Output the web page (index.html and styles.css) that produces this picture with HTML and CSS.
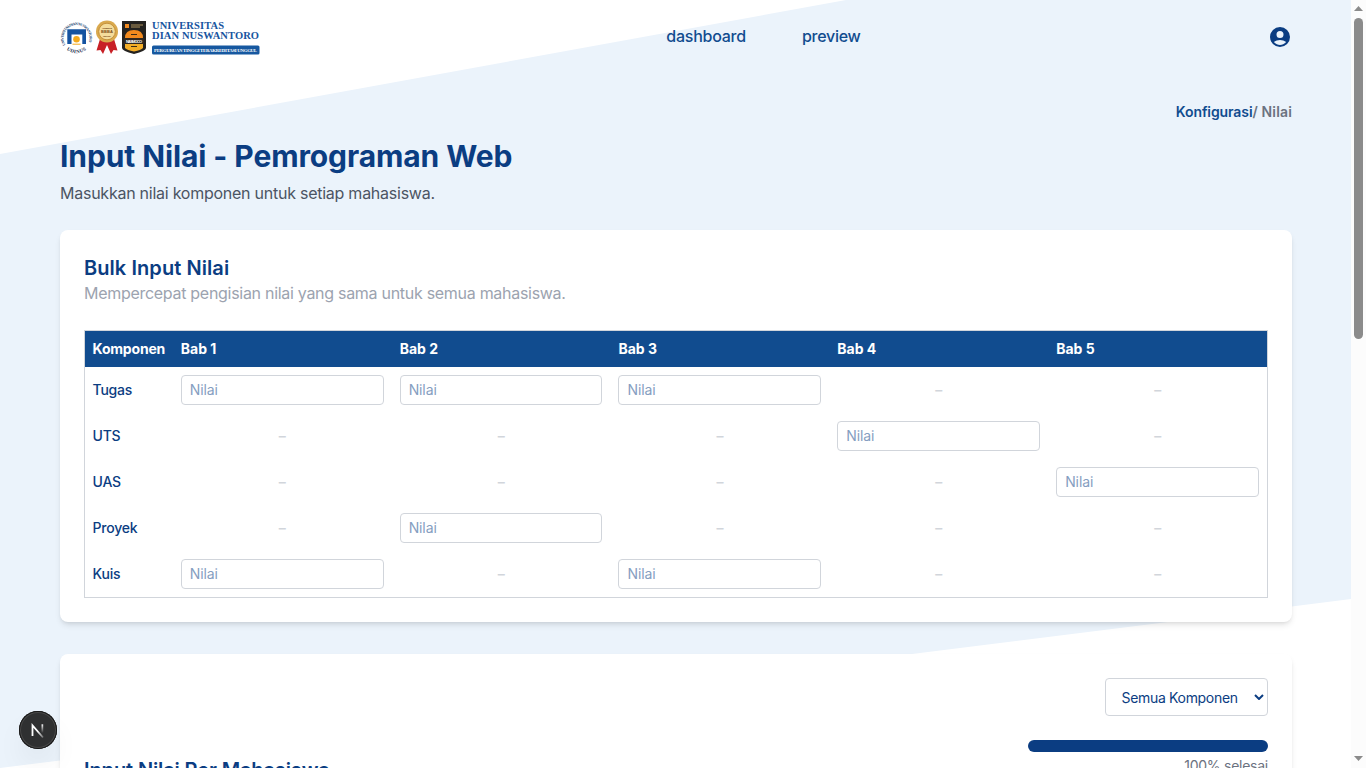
FILE: index.html
```html
<!DOCTYPE html>
<html lang="id">
<head>
<meta charset="utf-8">
<title>Input Nilai</title>
<link rel="stylesheet" href="styles.css">
</head>
<body>
<div class="page">
  <header class="header">
    <svg class="logo" width="200" height="36" viewBox="0 0 200 36" role="img" aria-label="Universitas Dian Nuswantoro">
      <defs>
        <path id="ring" d="M5.500 25A13 13 0 1 1 27.500 25"/>
        <path id="ring-low" d="M4.500 27.500A15.500 15.500 0 0 0 28.500 27.500"/>
      </defs>
      <text class="seal-text"><textPath href="#ring" textLength="52">UNIVERSITAS DIAN NUSWANTORO</textPath></text>
      <text class="seal-name"><textPath href="#ring-low" textLength="21" startOffset="3">UDINUS</textPath></text>
      <path d="M7.300 9.300H26V24H22.300V14.500H11.500V24H7.300Z" fill="#1553a0"/>
      <circle cx="16.500" cy="19.300" r="3.300" fill="#f3a91c"/>
      <path d="M12.500 24.200h8" stroke="#f3a91c" stroke-width="1"/>
      <path d="M40 19L36.500 30.500l4-.5 2.500 4 4-9 4 9 2.500-4 4 .5-3.500-11.500Z" fill="#c82026"/>
      <circle cx="47" cy="11.500" r="11" fill="#d9a94e"/>
      <circle cx="47" cy="11.500" r="8.300" fill="#f4dc9b" stroke="#bd852f" stroke-width=".8"/>
      <text x="42" y="9" class="medal" textLength="10">AKREDITASI</text>
      <text x="41" y="13" class="medal medal-big" textLength="12">BBBA</text>
      <text x="43" y="16.500" class="medal" textLength="8">UNGGUL</text>
      <path d="M62 1H86V28Q86 31 74 34Q62 31 62 28Z" fill="#24221f"/>
      <path d="M65 4h4v4h-4Z" fill="#f28a1e"/>
      <path d="M71 5h12M71 7h9" stroke="#d5b16c" stroke-width=".8"/>
      <path d="M65 18Q65 10 74 10T83 18Z" fill="#f28a1e"/>
      <path d="M65 24H83V28Q81 30 74 31.500Q67 30 65 28Z" fill="#f4ae28"/>
      <path d="M64 18H84V24H64Z" fill="#302820"/>
      <path d="M71 14.500h6M71 26.500h6" stroke="#3a2b18"/>
      <text x="66" y="22.500" class="shield" textLength="16">NASMOCO</text>
      <text x="92" y="9" class="brand" textLength="72">UNIVERSITAS</text>
      <text x="92" y="19.400" class="brand" textLength="107">DIAN NUSWANTORO</text>
      <rect x="92" y="25.500" width="107.500" height="9" rx="1.500" fill="#1658a0"/>
      <text x="94" y="31.800" class="motto" textLength="103">PERGURUAN TINGGI TERAKREDITASI UNGGUL</text>
    </svg>
    <nav class="nav"><a>dashboard</a><a>preview</a></nav>
    <svg class="avatar" width="24" height="24" viewBox="0 0 24 24"><path fill="#0b3d82" fill-rule="evenodd" d="M12 2a10 10 0 1 0 0 20 10 10 0 0 0 0-20Zm0 4a3.500 3.500 0 1 1 0 7 3.500 3.500 0 0 1 0-7Zm0 14c-2.030 0-4.430-.82-6.140-2.880C7.550 15.800 9.680 15 12 15s4.450.8 6.140 2.120C16.430 19.180 14.030 20 12 20Z"/></svg>
  </header>
  <main class="content">
    <div class="crumbs"><b>Konfigurasi</b><span>/ Nilai</span></div>
    <h1 class="title">Input Nilai - Pemrograman Web</h1>
    <p class="subtitle">Masukkan nilai komponen untuk setiap mahasiswa.</p>
    <section class="card bulk">
      <h2 class="card-title">Bulk Input Nilai</h2>
      <p class="card-note">Mempercepat pengisian nilai yang sama untuk semua mahasiswa.</p>
      <div class="grid">
        <div class="row head"><span>Komponen</span><span>Bab 1</span><span>Bab 2</span><span>Bab 3</span><span>Bab 4</span><span>Bab 5</span></div>
        <div class="row"><span>Tugas</span><input class="field" placeholder="Nilai"><input class="field" placeholder="Nilai"><input class="field" placeholder="Nilai"><i>–</i><i>–</i></div>
        <div class="row"><span>UTS</span><i>–</i><i>–</i><i>–</i><input class="field" placeholder="Nilai"><i>–</i></div>
        <div class="row"><span>UAS</span><i>–</i><i>–</i><i>–</i><i>–</i><input class="field" placeholder="Nilai"></div>
        <div class="row"><span>Proyek</span><i>–</i><input class="field" placeholder="Nilai"><i>–</i><i>–</i><i>–</i></div>
        <div class="row"><span>Kuis</span><input class="field" placeholder="Nilai"><i>–</i><input class="field" placeholder="Nilai"><i>–</i><i>–</i></div>
      </div>
    </section>
    <section class="card students">
      <div class="select"><span>Semua Komponen</span><svg width="10" height="6" viewBox="0 0 10 6"><path d="M1 1l4 4 4-4" fill="none" stroke="#0b3d82" stroke-width="2"/></svg></div>
      <div class="progress"></div>
      <div class="summary"><h2 class="card-title students-title">Input Nilai Per Mahasiswa</h2><span class="done">100% selesai</span></div>
    </section>
  </main>
</div>
<div class="scrollbar">
  <svg width="15" height="18" viewBox="0 0 15 18"><path d="M3 11l4.500-5 4.500 5Z" fill="#8b8b8b"/></svg>
  <div class="thumb"></div>
  <svg class="down" width="15" height="18" viewBox="0 0 15 18"><path d="M3 6l4.500 5L12 6Z" fill="#8b8b8b"/></svg>
</div>
<div class="badge"><svg width="38" height="38" viewBox="0 0 38 38">
  <defs>
    <linearGradient id="diag" gradientUnits="userSpaceOnUse" x1="19" y1="20" x2="25" y2="27"><stop offset="0" stop-color="#fff"/><stop offset="1" stop-color="#fff" stop-opacity=".2"/></linearGradient>
    <linearGradient id="bar" gradientUnits="userSpaceOnUse" x1="0" y1="13" x2="0" y2="22"><stop offset="0" stop-color="#fff"/><stop offset="1" stop-color="#fff" stop-opacity="0"/></linearGradient>
  </defs>
  <path d="M13.500 25V14.500L24 26.500" fill="none" stroke="url(#diag)" stroke-width="1.800"/><path d="M22.500 13.300h1.700V22h-1.700Z" fill="url(#bar)"/></svg></div>
</body>
</html>
```
FILE: styles.css
```css
* { box-sizing: border-box; }
body { margin: 0; width: 1366px; height: 768px; overflow: hidden; display: flex; font-family: Inter, "Liberation Sans", sans-serif; color: #0b3d82; background: #fff; }
h1, h2, p { margin: 0; }
i { font-style: normal; }
.page { width: 1351px; height: 768px; overflow: hidden; background: #ebf3fb; position: relative; isolation: isolate; }
.page::before, .page::after { content: ""; position: absolute; inset: 0; z-index: -1; background: #fff; }
.page::before { clip-path: polygon(0 0, 846px 0, 0 154px); }
.page::after { clip-path: polygon(0 768px, 1351px 599px, 1351px 768px); }
.header { height: 74px; padding: 0 59px 0 60px; display: flex; justify-content: space-between; align-items: center; }
.logo { display: block; margin-top: 2px; overflow: visible; }
.nav { display: flex; gap: 56px; font-size: 16px; line-height: 24px; color: #114c8f; font-weight: 450; letter-spacing: -.25px; padding: 0 1px 2px 0; }
.seal-text { font: bold 3.8px "Liberation Serif", serif; fill: #26456f; }
.seal-name { font: bold 5px "Liberation Serif", serif; fill: #1b2d4c; }
.medal { font: bold 2.4px "Liberation Sans", sans-serif; fill: #7c4d19; }
.medal-big { font-size: 4px; }
.shield { font: bold 4px "Liberation Sans", sans-serif; fill: #fff; }
.brand { font: bold 10.5px "Liberation Serif", serif; fill: #1755a0; }
.motto { font: bold 4.8px "Liberation Serif", serif; fill: #fff; }
.content { padding: 28px 59px 0 60px; }
.crumbs { display: flex; justify-content: flex-end; font-size: 14px; line-height: 20px; font-weight: 600; color: #6b7280; }
.crumbs b { font-weight: 600; color: #114c8f; letter-spacing: -.1px; }
.crumbs span { letter-spacing: .15px; }
.title { font-size: 30px; line-height: 36px; margin-top: 16px; font-weight: 700; letter-spacing: -.1px; white-space: nowrap; }
.subtitle { font-size: 16px; line-height: 24px; margin-top: 7px; color: #4b5563; letter-spacing: -.25px; }
.card { background: #fff; border-radius: 8px; padding: 24px; box-shadow: 0 4px 6px -1px rgba(0,0,0,.1), 0 2px 4px -2px rgba(0,0,0,.1); }
.bulk { margin-top: 25px; height: 392px; }
.card-title { font-size: 20px; line-height: 28px; font-weight: 600; letter-spacing: .07px; }
.card-note { font-size: 16px; line-height: 22px; padding-bottom: 2px; color: #9ca3af; letter-spacing: -.29px; }
.grid { margin-top: 24px; border: 1px solid #d1d5db; font-size: 14px; line-height: 20px; }
.row { height: 46px; display: grid; grid-template-columns: 72.200px repeat(5, 1fr); column-gap: 16px; padding: 0 8px 0 7.600px; align-items: center; font-weight: 500; letter-spacing: -.25px; }
.row i { text-align: center; color: #d1d5db; font-weight: 600; }
.head { height: 36px; background: #114c8f; color: #fff; font-weight: 700; letter-spacing: -.2px; }
.head span + span { letter-spacing: 0; }
.field { width: 100%; height: 30px; border: 1px solid #d1d5db; border-radius: 4px; padding: 3px 8px 5px; font: 14px/20px Inter, sans-serif; letter-spacing: -.1px; background: #fff; outline: 0; }
.field::placeholder { color: #859ec1; opacity: 1; }
.students { margin-top: 32px; height: 200px; display: flex; flex-direction: column; }
.students-title { letter-spacing: -.12px; }
.select { align-self: flex-end; width: 163px; height: 38px; border: 1px solid #d1d5db; border-radius: 4px; padding: 0 3px 0 15.500px; display: flex; align-items: center; justify-content: space-between; font-size: 14px; letter-spacing: -.32px; white-space: nowrap; }
.progress { align-self: flex-end; width: 240px; height: 12px; margin-top: 24px; border-radius: 6px; background: #0b3d82; }
.summary { display: flex; justify-content: space-between; align-items: flex-start; margin-top: 4px; }
.done { font-size: 14px; line-height: 20px; color: #6b7280; letter-spacing: -.25px; }
.scrollbar { width: 15px; height: 768px; background: #fcfcfc; display: flex; flex-direction: column; }
.thumb { width: 9px; height: 321px; margin-left: 3px; border-radius: 5px; background: #8b8b8b; }
.down { margin-top: auto; }
.badge { position: absolute; left: 19px; top: 711px; width: 38px; height: 38px; border-radius: 50%; background: #2f3031; box-shadow: inset 0 0 0 1px #171717, inset 0 0 0 2px #484848, 0 16px 32px -8px rgba(0,0,0,.14); }
.badge svg { display: block; }
```
